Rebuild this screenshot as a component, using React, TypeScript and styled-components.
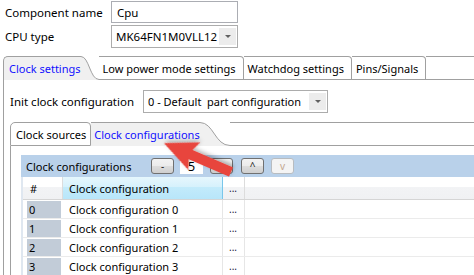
import React from 'react'
import styled, { createGlobalStyle } from 'styled-components'

const GlobalStyle = createGlobalStyle`
  html, body { margin: 0; padding: 0; background: #fff; }
  body {
    font-family: "Noto Sans", "Open Sans", sans-serif;
    font-size: 11px;
    color: #000;
  }
`

const LINE = '#a0a0a0'

const Page = styled.div`
  position: relative;
  width: 474px;
  height: 275px;
  overflow: hidden;
  background: #fff;
`

const Form = styled.div`
  display: grid;
  grid-template-columns: 106px 127px;
  row-gap: 2px;
  padding: 1px 0 0 5px;
  align-items: center;
  font-size: 11.5px;
`

const Label = styled.span`
  white-space: nowrap;
`

const TextInput = styled.div`
  height: 20px;
  border: 1px solid #abadb3;
  padding-left: 5px;
  display: flex;
  align-items: center;
  background: #fff;
`

const ComboBox = styled.div<{ $width: number }>`
  width: ${p => p.$width}px;
  box-sizing: border-box;
  height: 23px;
  border: 1px solid #acacac;
  display: flex;
  align-items: center;
  justify-content: space-between;
  padding: 0 1px 0 4px;
  background: #fff;
  white-space: pre;
`

const ComboArrow = styled.span`
  width: 17px;
  height: 17px;
  background: #ececec;
  display: flex;
  align-items: center;
  justify-content: center;
  &::after {
    content: '';
    border-left: 3px solid transparent;
    border-right: 3px solid transparent;
    border-top: 3px solid #606060;
  }
`

const Folder = styled.div<{ $top: number; $left: number }>`
  margin: ${p => p.$top}px 0 0 ${p => p.$left}px;
`

const TabBar = styled.div`
  display: flex;
  height: 24px;
`

const ActiveTab = styled.div<{ $edge?: boolean }>`
  display: flex;
  align-items: center;
  box-sizing: border-box;
  height: 24px;
  padding-left: ${p => (p.$edge ? 5 : 3)}px;
  background: #f0f0f0;
  color: #1010ff;
  border-top: 1px solid ${LINE};
  border-left: ${p => (p.$edge ? `1px solid ${LINE}` : 'none')};
  border-top-left-radius: ${p => (p.$edge ? 5 : 0)}px;
  white-space: nowrap;
`

const Tab = styled.div<{ $first?: boolean }>`
  display: flex;
  align-items: center;
  box-sizing: border-box;
  height: 24px;
  padding: 0 ${p => (p.$first ? 4 : 7)}px 0 ${p => (p.$first ? 5 : 4)}px;
  border-top: 1px solid ${LINE};
  border-bottom: 1px solid ${LINE};
  border-right: 1px solid ${LINE};
  border-left: ${p => (p.$first ? `1px solid ${LINE}` : 'none')};
  border-top-left-radius: ${p => (p.$first ? 5 : 0)}px;
  border-top-right-radius: 4px;
  background: #fff;
  white-space: nowrap;
`

const TabFill = styled.div`
  flex: 1;
  border-top: 1px solid ${LINE};
  border-bottom: 1px solid ${LINE};
`

const CurveSvg = styled.svg`
  display: block;
  flex: none;
`

const TabCurve = ({ width }: { width: number }) => (
  <CurveSvg width={width} height={24} viewBox={`0 0 ${width} 24`}>
    <path
      d={`M0 0.5 C${width * 0.45} 0.5 ${width * 0.5} 23.5 ${width} 23.5 L${width} 24 L0 24 Z`}
      fill="#f0f0f0"
    />
    <path d={`M0 0.5 C${width * 0.45} 0.5 ${width * 0.5} 23.5 ${width} 23.5`} fill="none" stroke={LINE} />
  </CurveSvg>
)

const Body = styled.div<{ $pad: string }>`
  border-left: 1px solid ${LINE};
  padding: ${p => p.$pad};
  background: #fff;
`

const InitRow = styled.div`
  display: flex;
  align-items: center;
`

const InitLabel = styled.span`
  width: 133px;
  white-space: nowrap;
  font-size: 11.5px;
`

const TableBar = styled.div`
  display: flex;
  align-items: center;
  height: 22px;
  background: #b9d1ea;
  padding-left: 5px;
`

const BarTitle = styled.span`
  width: 125px;
  white-space: nowrap;
`

const BarButton = styled.div<{ $gap: number; $disabled?: boolean }>`
  box-sizing: border-box;
  width: 23px;
  height: 16px;
  margin-left: ${p => p.$gap}px;
  border: 1px solid ${p => (p.$disabled ? '#b8bcc0' : '#707070')};
  border-radius: 3px;
  background: ${p =>
    p.$disabled
      ? '#f4f4f4'
      : 'linear-gradient(#f2f2f2 0%, #ebebeb 50%, #dddddd 50%, #cfcfcf 100%)'};
  color: ${p => (p.$disabled ? '#c4a890' : '#202020')};
  font-size: 10px;
  display: flex;
  align-items: center;
  justify-content: center;
  line-height: 1;
`

const SpinField = styled.div`
  width: 23px;
  height: 16px;
  margin-left: 6px;
  background: #fff;
  font-size: 13px;
  display: flex;
  align-items: center;
  justify-content: center;
`

const Grid = styled.div`
  border-left: 2px solid #dfe7f0;
`

const HeadRow = styled.div`
  display: grid;
  grid-template-columns: 40px 160px 22px 1fr;
  height: 22px;
  background: linear-gradient(#ffffff 0%, #ffffff 45%, #f2f3f5 45%, #f0f1f3 100%);
  border-bottom: 1px solid #d5d5d5;
`

const HeadCell = styled.div<{ $active?: boolean; $pad: number }>`
  display: flex;
  align-items: center;
  padding-left: ${p => p.$pad}px;
  border-right: 1px solid ${p => (p.$active ? '#79c6ea' : '#dcdcdc')};
  background: ${p => (p.$active ? 'linear-gradient(#e6f7fd 0%, #d6f1fc 45%, #c3ebfb 45%, #b8e6fa 100%)' : 'transparent')};
  white-space: nowrap;
  &:last-child {
    border-right: none;
  }
`

const DataRow = styled.div`
  display: grid;
  grid-template-columns: 40px 160px 22px 1fr;
  height: 18px;
  border-bottom: 1px solid #ebebeb;
`

const NumCell = styled.div`
  margin: 1px 2px 0 4px;
  height: 17px;
  background: #c2ccd8;
  padding-left: 2px;
  display: flex;
  align-items: center;
`

const Cell = styled.div<{ $pad: number }>`
  display: flex;
  align-items: center;
  padding-left: ${p => p.$pad}px;
  border-right: 1px solid #e6e6e6;
  white-space: nowrap;
  &:last-child {
    border-right: none;
  }
`

const Dots = styled.span`
  font-size: 10px;
  color: #202040;
`

const ArrowOverlay = styled.svg`
  position: absolute;
  left: 0;
  top: 0;
  pointer-events: none;
`

const Combo = ({ width, value }: { width: number; value: string }) => (
  <ComboBox $width={width}>
    <span>{value}</span>
    <ComboArrow />
  </ComboBox>
)

const rows = [0, 1, 2, 3]

export default function App() {
  return (
    <Page>
      <GlobalStyle />
      <Form>
        <Label>Component name</Label>
        <TextInput>Cpu</TextInput>
        <Label>CPU type</Label>
        <Combo width={127} value="MK64FN1M0VLL12" />
      </Form>

      <Folder $top={8} $left={3}>
        <TabBar>
          <ActiveTab $edge>Clock settings</ActiveTab>
          <TabCurve width={18} />
          <Tab>Low power mode settings</Tab>
          <Tab>Watchdog settings</Tab>
          <Tab>Pins/Signals</Tab>
          <TabFill />
        </TabBar>
        <Body $pad="10px 0 0 6px">
          <InitRow>
            <InitLabel>Init clock configuration</InitLabel>
            <Combo width={185} value="0 - Default  part configuration" />
          </InitRow>

          <Folder $top={9} $left={0}>
            <TabBar>
              <Tab $first>Clock sources</Tab>
              <ActiveTab>Clock configurations</ActiveTab>
              <TabCurve width={30} />
              <TabFill />
            </TabBar>
            <Body $pad="9px 0 0 10px">
              <TableBar>
                <BarTitle>Clock configurations</BarTitle>
                <BarButton $gap={0}>-</BarButton>
                <SpinField>5</SpinField>
                <BarButton $gap={7}>+</BarButton>
                <BarButton $gap={8}>^</BarButton>
                <BarButton $gap={7} $disabled>v</BarButton>
              </TableBar>
              <Grid>
                <HeadRow>
                  <HeadCell $pad={7}>#</HeadCell>
                  <HeadCell $pad={6} $active>Clock configuration</HeadCell>
                  <HeadCell $pad={6}><Dots>...</Dots></HeadCell>
                  <HeadCell $pad={0} />
                </HeadRow>
                {rows.map(i => (
                  <DataRow key={i}>
                    <NumCell>{i}</NumCell>
                    <Cell $pad={6}>Clock configuration {i}</Cell>
                    <Cell $pad={6}><Dots>...</Dots></Cell>
                    <Cell $pad={0} />
                  </DataRow>
                ))}
              </Grid>
            </Body>
          </Folder>
        </Body>
      </Folder>

      <ArrowOverlay width={474} height={275} viewBox="0 0 474 275">
        <defs>
          <filter id="arrowShadow" x="-20%" y="-20%" width="140%" height="150%">
            <feDropShadow dx="0" dy="2" stdDeviation="2" floodColor="#000" floodOpacity="0.3" />
          </filter>
        </defs>
        <g transform="translate(231 172) rotate(203.3)" filter="url(#arrowShadow)">
          <path d="M0 -5 L44 -5 L40 -15 L73 0 L40 15 L44 5 L0 5 Z" fill="#e8453c" />
        </g>
      </ArrowOverlay>
    </Page>
  )
}
